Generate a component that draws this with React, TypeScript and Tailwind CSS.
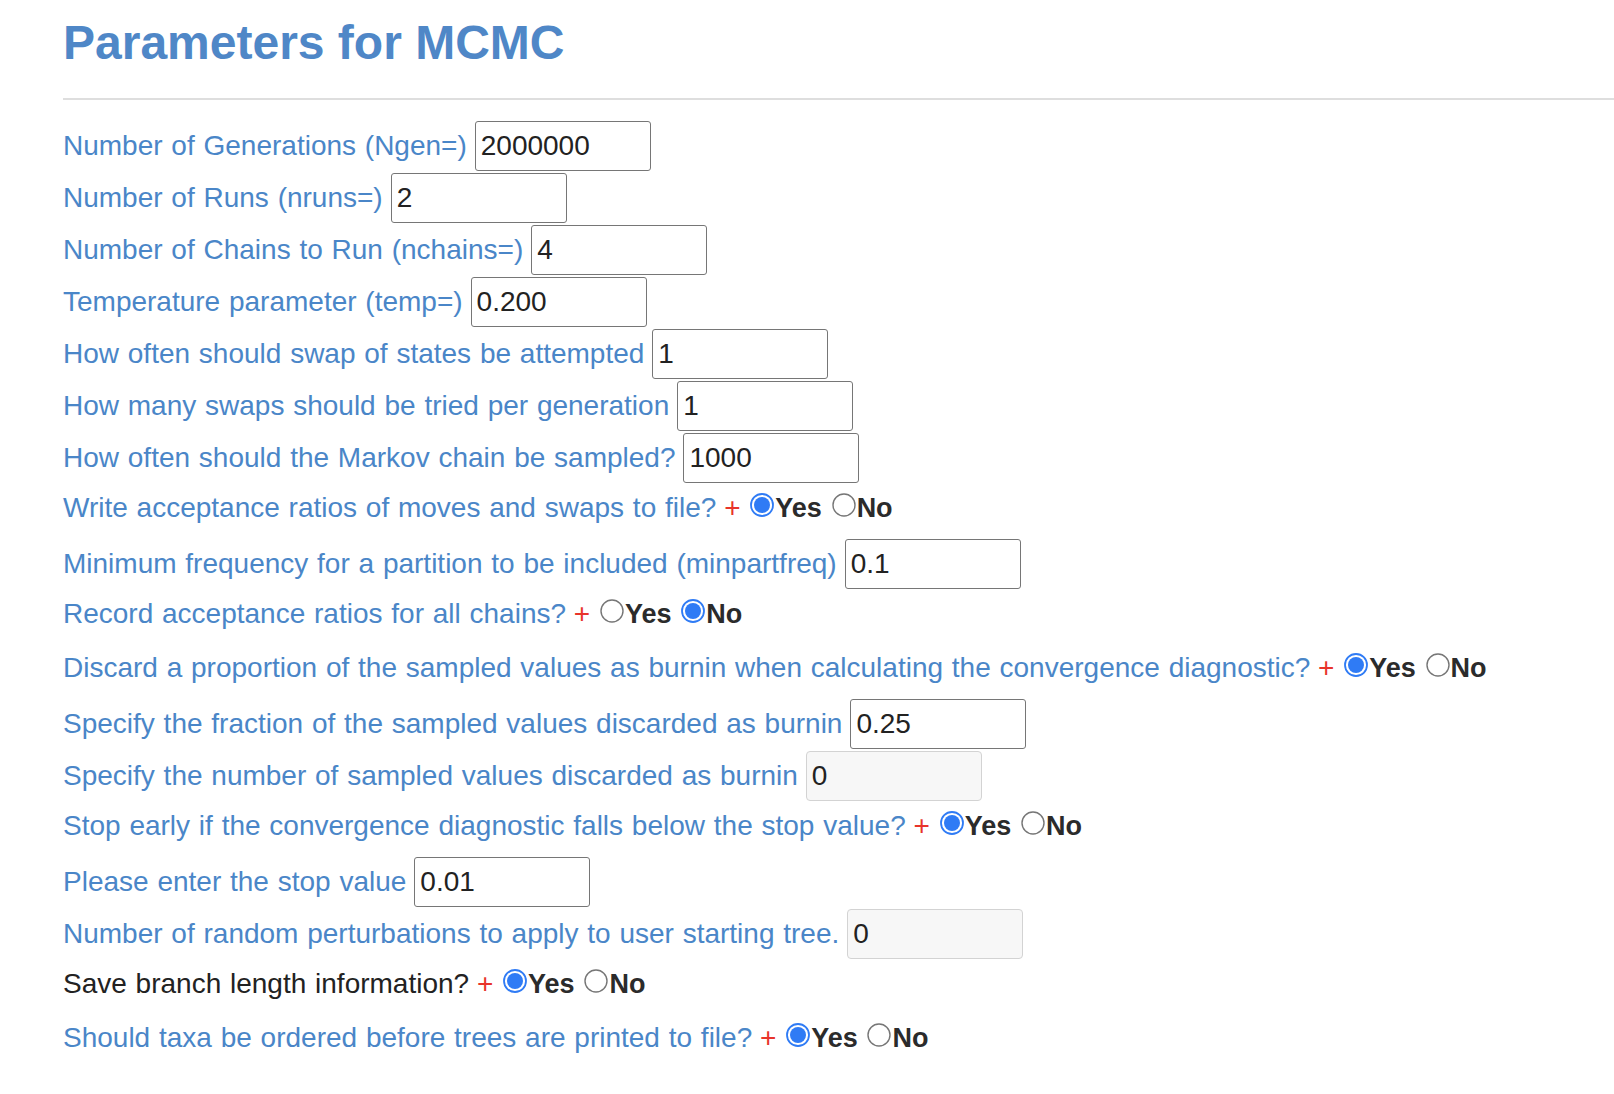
import React from "react";

const LABEL = "text-[#4a86c8]";

function Radio({ checked }: { checked: boolean }) {
  return (
    <svg
      width="24"
      height="24"
      viewBox="0 0 24 24"
      className="inline-block ml-[2px] mr-[1px] align-baseline"
    >
      {checked ? (
        <>
          <circle cx="12" cy="12" r="11" fill="#ffffff" stroke="#2f7bf5" strokeWidth="1.8" />
          <circle cx="12" cy="12" r="8" fill="#2f7bf5" />
        </>
      ) : (
        <circle cx="12" cy="12" r="11" fill="#ffffff" stroke="#767676" strokeWidth="1.4" />
      )}
    </svg>
  );
}

function InputRow({
  label,
  value,
  disabled,
}: {
  label: string;
  value: string;
  disabled?: boolean;
}) {
  return (
    <div className="flex h-[50px] mb-[2px] items-center gap-[8px]">
      <span className={`${LABEL} whitespace-nowrap [word-spacing:1px]`}>{label}</span>
      <input
        readOnly
        defaultValue={value}
        className={
          disabled
            ? "w-[176px] h-[50px] rounded-[4px] border border-[#d3d3d3] bg-[#f7f7f7] pl-[5px] text-[28px] text-[#222] outline-none"
            : "w-[176px] h-[50px] rounded-[3px] border border-[#767676] bg-white pl-[5px] text-[28px] text-[#222] outline-none"
        }
      />
    </div>
  );
}

function RadioRow({
  label,
  yes,
  dark,
}: {
  label: string;
  yes: boolean;
  dark?: boolean;
}) {
  return (
    <div className="h-[45px] mb-[9px] leading-[45px] whitespace-nowrap">
      <span className={`${dark ? "text-[#222]" : LABEL} [word-spacing:1px]`}>{label}</span>{" "}
      <span className="text-[#e8342a]">+</span>{" "}
      <Radio checked={yes} />
      <span className="font-bold text-[27px] text-[#2b2b2b]">Yes</span>{" "}
      <Radio checked={!yes} />
      <span className="font-bold text-[27px] text-[#2b2b2b]">No</span>
    </div>
  );
}

export default function App() {
  return (
    <div className="min-h-[1094px] bg-white pl-[63px] pt-[15px] font-['Liberation_Sans',Arial,Helvetica,sans-serif] text-[28px]">
      <h1 className="text-[48px] leading-[56px] font-bold text-[#4f87c7]">
        Parameters for MCMC
      </h1>
      <div className="mt-[27px] h-[2px] bg-[#dedede]" />
      <div className="mt-[21px]">
        <InputRow label="Number of Generations (Ngen=)" value="2000000" />
        <InputRow label="Number of Runs (nruns=)" value="2" />
        <InputRow label="Number of Chains to Run (nchains=)" value="4" />
        <InputRow label="Temperature parameter (temp=)" value="0.200" />
        <InputRow label="How often should swap of states be attempted" value="1" />
        <InputRow label="How many swaps should be tried per generation" value="1" />
        <InputRow label="How often should the Markov chain be sampled?" value="1000" />
        <RadioRow label="Write acceptance ratios of moves and swaps to file?" yes={true} />
        <InputRow
          label="Minimum frequency for a partition to be included (minpartfreq)"
          value="0.1"
        />
        <RadioRow label="Record acceptance ratios for all chains?" yes={false} />
        <RadioRow
          label="Discard a proportion of the sampled values as burnin when calculating the convergence diagnostic?"
          yes={true}
        />
        <InputRow
          label="Specify the fraction of the sampled values discarded as burnin"
          value="0.25"
        />
        <InputRow
          label="Specify the number of sampled values discarded as burnin"
          value="0"
          disabled
        />
        <RadioRow
          label="Stop early if the convergence diagnostic falls below the stop value?"
          yes={true}
        />
        <InputRow label="Please enter the stop value" value="0.01" />
        <InputRow
          label="Number of random perturbations to apply to user starting tree."
          value="0"
          disabled
        />
        <RadioRow label="Save branch length information?" yes={true} dark />
        <RadioRow
          label="Should taxa be ordered before trees are printed to file?"
          yes={true}
        />
      </div>
    </div>
  );
}
